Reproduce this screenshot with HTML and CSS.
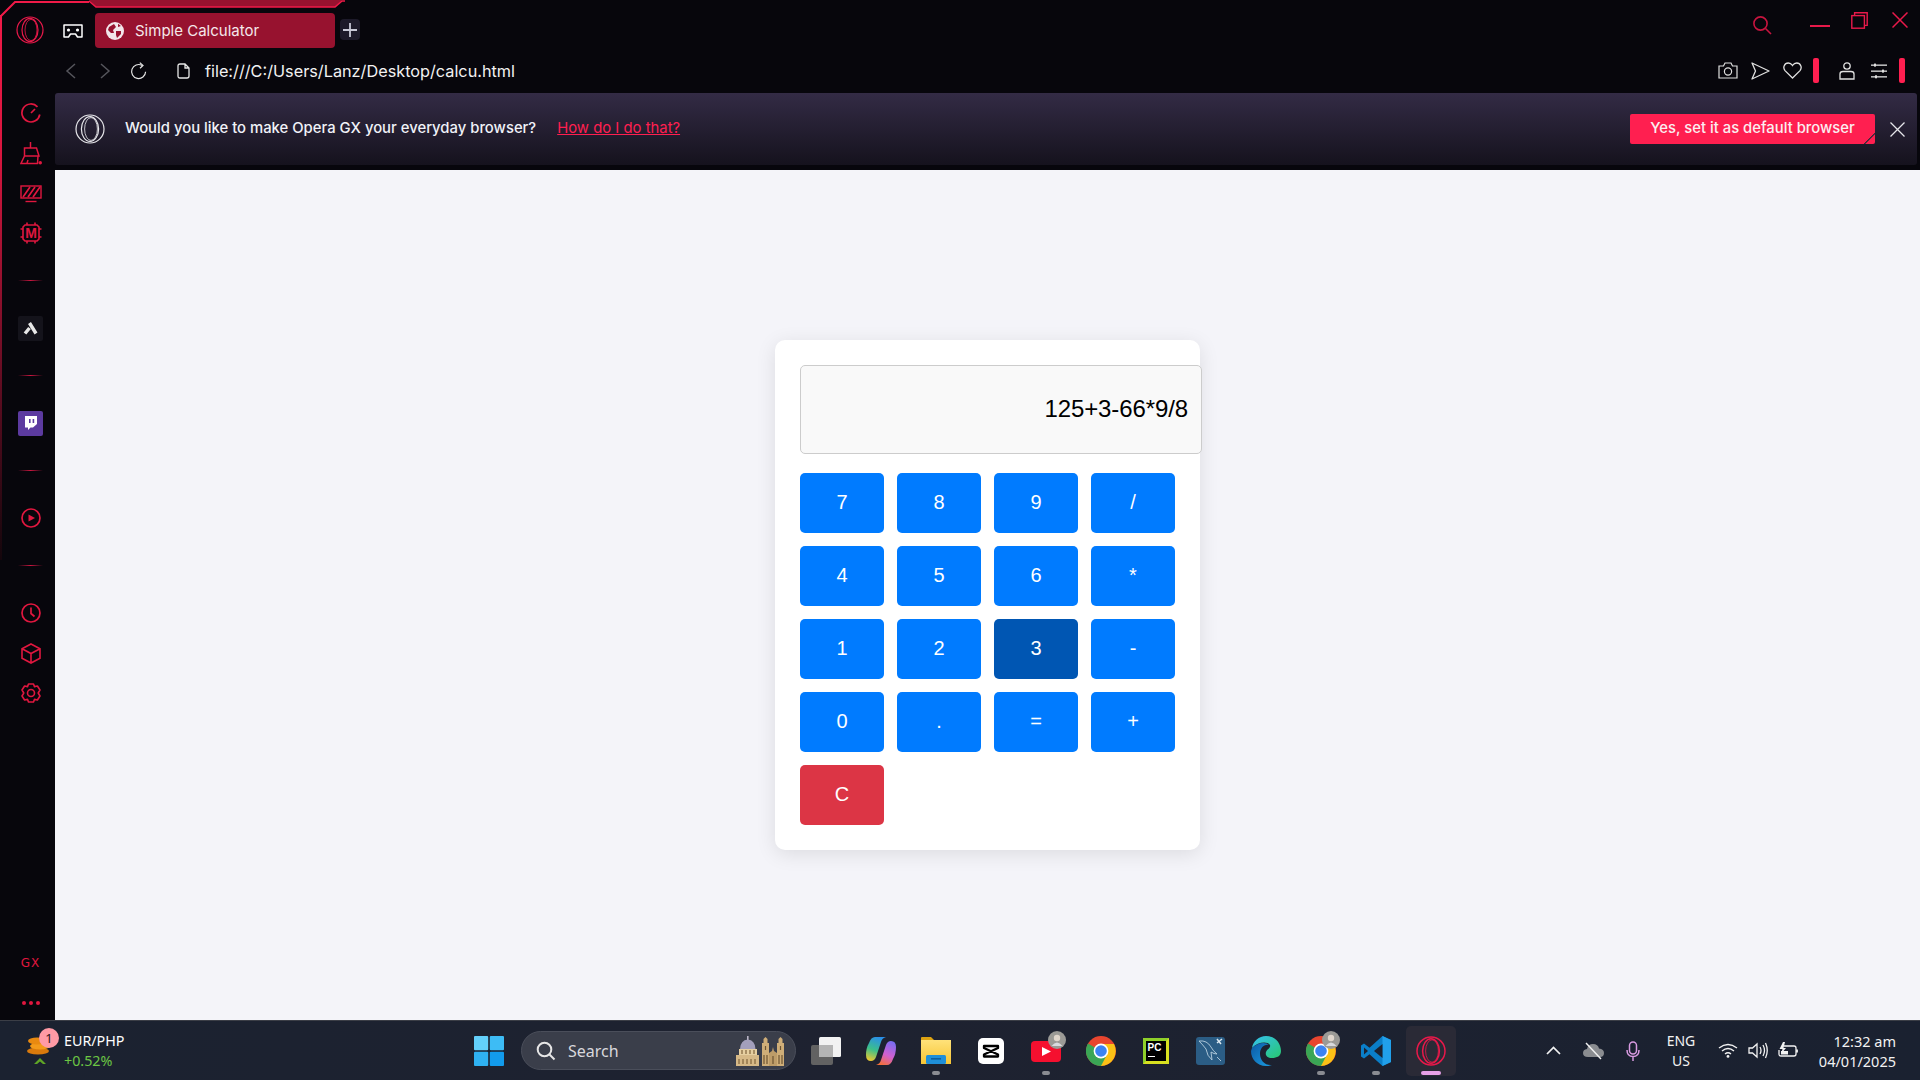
FILE: index.html
```html
<!DOCTYPE html>
<html>
<head>
  <meta http-equiv="Content-Type" content="text/html; charset=UTF-8" />
  <title>Simple Calculator</title>
  <link rel="stylesheet" href="styles.css">
</head>
<body>

<div class="window">
  <!-- red frame over the top and left edge -->
  <svg class="frame" width="345" height="560" viewBox="0 0 345 560" fill="none">
    <defs>
      <linearGradient id="edge" x1="0" y1="0" x2="0" y2="1">
        <stop offset="0" stop-color="#f01a48"/>
        <stop offset="0.25" stop-color="#d8163f"/>
        <stop offset="0.7" stop-color="#5a0c20"/>
        <stop offset="1" stop-color="#14060c"/>
      </linearGradient>
    </defs>
    <path d="M89 0 L96 7 H335 L342 0 Z" fill="#97122f"/>
    <path d="M89 1 L96 7 H335 L342 1 H345" stroke="#f01a48" stroke-width="1.6"/>
    <path d="M1 16 L15 2 H89" stroke="#f01a48" stroke-width="2"/>
    <rect x="0" y="15" width="2" height="545" fill="url(#edge)"/>
  </svg>

  <div class="tabrow">
    <svg class="logo" width="28" height="28" viewBox="0 0 28 28" fill="none" stroke="#e8194a" stroke-width="1.2">
      <circle cx="14" cy="14" r="13"/>
      <ellipse cx="14" cy="14" rx="8" ry="11.6"/>
      <ellipse cx="15" cy="14" rx="6" ry="10.6" stroke-width="0.8"/>
    </svg>
    <svg class="gamepad" width="20" height="14" viewBox="0 0 20 14" fill="none" stroke="#fff" stroke-width="1.5">
      <path d="M1 1 H19 V13 H14.5 L12.5 10 H7.5 L5.5 13 H1 Z" stroke-linejoin="round"/>
      <circle cx="5.5" cy="6" r="1.6" fill="#fff" stroke="none"/>
      <circle cx="14.5" cy="6" r="1.6" fill="#fff" stroke="none"/>
    </svg>
    <div class="tab">
      <svg width="18" height="18" viewBox="0 0 18 18">
        <circle cx="9" cy="9" r="9" fill="#f2e6ea"/>
        <path d="M3 5 L8 2 L10 5 L7 8 L8 11 L5 11 L2 8 Z M10 9 L15 9 L15 12 L11 16 L10 13 Z M12 1.8 L15 4 L12 5 Z" fill="#97122f"/>
      </svg>
      <span>Simple Calculator</span>
    </div>
    <div class="newtab">
      <svg width="16" height="16" viewBox="0 0 16 16" stroke="#c8c8d6" stroke-width="1.8"><path d="M8 1 V15 M1 8 H15"/></svg>
    </div>
    <div class="wincontrols">
      <svg class="win-search" width="20" height="20" viewBox="0 0 20 20" fill="none" stroke="#c8143f" stroke-width="1.6">
        <circle cx="8.5" cy="8.5" r="6.6"/><path d="M13.5 13.5 L19 19"/>
      </svg>
      <svg class="win-min" width="20" height="2" viewBox="0 0 20 2"><rect width="20" height="2" fill="#e8194a"/></svg>
      <svg class="win-max" width="17" height="17" viewBox="0 0 17 17" fill="none" stroke="#e8194a" stroke-width="1.4">
        <rect x="0.8" y="3.6" width="12.6" height="12.6"/><path d="M3.6 3.6 V0.8 H16.2 V13.4 H13.4"/>
      </svg>
      <svg class="win-close" width="16" height="16" viewBox="0 0 16 16" stroke="#e8194a" stroke-width="1.5"><path d="M0.5 0.5 L15.5 15.5 M15.5 0.5 L0.5 15.5"/></svg>
    </div>
  </div>

  <div class="navrow">
    <div class="navbtn"><svg width="12" height="16" viewBox="0 0 12 16" fill="none" stroke="#55555c" stroke-width="1.5"><path d="M10 1 L2 8 L10 15"/></svg></div>
    <div class="navbtn"><svg width="12" height="16" viewBox="0 0 12 16" fill="none" stroke="#55555c" stroke-width="1.5"><path d="M2 1 L10 8 L2 15"/></svg></div>
    <div class="navbtn"><svg width="18" height="18" viewBox="0 0 18 18" fill="none" stroke="#e6e6e6" stroke-width="1.2"><path d="M15.6 9.8 A7 7 0 1 1 12 3.4"/><path d="M9.8 0.6 L13 3.4 L10 6.2"/></svg></div>
    <div class="filebtn"><svg width="13" height="16" viewBox="0 0 13 16" fill="none" stroke="#e6e6e6" stroke-width="1.3"><path d="M1 3 Q1 1 3 1 H8 L12 5 V13 Q12 15 10 15 H3 Q1 15 1 13 Z M8 1 V5 H12"/></svg></div>
    <span class="url">file:///C:/Users/Lanz/Desktop/calcu.html</span>
    <div class="tools">
      <div class="tool"><svg width="20" height="17" viewBox="0 0 20 17" fill="none" stroke="#e0e0e0" stroke-width="1.2"><path d="M1 4 H5.5 L7 1 H13 L14.5 4 H19 V16 H1 Z"/><circle cx="10" cy="9.5" r="3.6"/></svg></div>
      <div class="tool"><svg width="19" height="18" viewBox="0 0 19 18" fill="none" stroke="#e0e0e0" stroke-width="1.3"><path d="M1 1 L18 9 L1 17 L4.5 9 Z" stroke-linejoin="round"/></svg></div>
      <div class="tool"><svg width="19" height="17" viewBox="0 0 19 17" fill="none" stroke="#e0e0e0" stroke-width="1.3"><path d="M9.5 16 L2 8.6 C-0.5 5.5 1.4 1 5.2 1 C7 1 8.5 2 9.5 3.5 C10.5 2 12 1 13.8 1 C17.6 1 19.5 5.5 17 8.6 Z"/></svg></div>
      <div class="redbar first"></div>
      <div class="tool user"><svg width="16" height="18" viewBox="0 0 16 18" fill="none" stroke="#e0e0e0" stroke-width="1.3"><circle cx="8" cy="4" r="3.2"/><path d="M1 17 V12 Q1 9.5 4 9.5 H12 Q15 9.5 15 12 V17 Z"/></svg></div>
      <div class="tool"><svg width="16" height="16" viewBox="0 0 16 16" fill="#e0e0e0"><rect y="1.5" width="16" height="1.3"/><rect y="7.5" width="16" height="1.3"/><rect y="13.2" width="16" height="1.3"/><rect x="3" y="0.6" width="2" height="3"/><rect x="11" y="6.6" width="2" height="3"/><rect x="4" y="12.3" width="2" height="3"/></svg></div>
      <div class="redbar"></div>
    </div>
  </div>

  <div class="main">
    <div class="sidebar">
      <div class="sideitem"><svg width="20" height="20" viewBox="0 0 20 20" fill="none" stroke="#e0173f" stroke-width="1.7"><path d="M18.8 11.5 A9 9 0 1 1 16.5 3.8"/><path d="M10 10 L14 6"/></svg></div>
      <div class="sideitem"><svg width="22" height="23" viewBox="0 0 22 23" fill="none" stroke="#e0173f" stroke-width="1.5"><path d="M10.5 0 V6 M4.5 6 H16.5 L19 14 H4.5 Z M4.5 14 L1 21.5 H17.5 L18 14"/><path d="M7 21 L8 18"/><rect x="18.5" y="19" width="3.5" height="3.5" rx="1.7" fill="#e0173f" stroke="none"/></svg></div>
      <div class="sideitem"><svg width="22" height="20" viewBox="0 0 22 20" fill="none" stroke="#e0173f" stroke-width="1.4"><rect x="1" y="3" width="20" height="12"/><path d="M3 14 L10 4 M8 14 L15 4 M13 14 L20 4" stroke-width="1.7"/><path d="M5.5 18.5 H16.5"/></svg></div>
      <div class="sideitem">
        <svg width="22" height="22" viewBox="0 0 22 22" fill="none" stroke="#e0173f" stroke-width="1.6">
          <path d="M3 5 L5 3 H17 L19 5 V17 L17 19 H5 L3 17 Z"/>
          <path d="M7 0.5 V3 M15 0.5 V3 M7 19 V21.5 M15 19 V21.5 M0.5 7 H3 M0.5 15 H3 M19 7 H21.5 M19 15 H21.5"/>
          <text x="11" y="16" text-anchor="middle" class="chip-text">M</text>
        </svg>
      </div>
      <div class="sep"></div>
      <div class="sideitem"><div class="sidetile kite"><svg width="15" height="13" viewBox="0 0 15 13" fill="none" stroke="#e8e8e8" stroke-width="3.4"><path d="M6.5 1 L13 11.5 M2 11.5 L6.5 6"/></svg></div></div>
      <div class="sep"></div>
      <div class="sideitem"><div class="sidetile twitch"><svg width="13" height="14" viewBox="0 0 13 14"><path d="M1 0 H13 V8 L9 11.5 H6.5 L4 14 V11.5 H1 Z" fill="#fff"/><rect x="5" y="3" width="1.6" height="4" fill="#5c3aa0"/><rect x="8.6" y="3" width="1.6" height="4" fill="#5c3aa0"/></svg></div></div>
      <div class="sep"></div>
      <div class="sideitem"><svg width="20" height="20" viewBox="0 0 20 20" fill="none" stroke="#e0173f" stroke-width="1.7"><circle cx="10" cy="10" r="9"/><path d="M7.5 6.5 L14 10 L7.5 13.5 Z" fill="#e0173f" stroke="none"/></svg></div>
      <div class="sep"></div>
      <div class="sideitem"><svg width="20" height="20" viewBox="0 0 20 20" fill="none" stroke="#e0173f" stroke-width="1.7"><circle cx="10" cy="10" r="9"/><path d="M10 4.5 V10.5 L13.5 13.5"/></svg></div>
      <div class="sideitem"><svg width="20" height="21" viewBox="0 0 20 21" fill="none" stroke="#e0173f" stroke-width="1.6"><path d="M10 1 L19 5.8 V15.2 L10 20 L1 15.2 V5.8 Z M1 5.8 L10 10.5 L19 5.8 M10 10.5 V20"/></svg></div>
      <div class="sideitem"><svg width="20" height="20" viewBox="0 0 20 20" fill="none" stroke="#e0173f" stroke-width="1.6"><circle cx="10" cy="10" r="3.5"/><path d="M7.5 1 H12.5 L13.5 3.6 L16.4 3 L19 7 L17.2 10 L19 13 L16.4 17 L13.5 16.4 L12.5 19 H7.5 L6.5 16.4 L3.6 17 L1 13 L2.8 10 L1 7 L3.6 3 L6.5 3.6 Z" stroke-linejoin="round"/></svg></div>
      <div class="sidebottom">
        <span class="gx">GX</span>
        <div class="dots"><i></i><i></i><i></i></div>
      </div>
    </div>

    <div class="content">
      <div class="banner">
        <svg class="banner-logo" width="30" height="30" viewBox="0 0 30 30" fill="none" stroke="#e8e8ec" stroke-width="1.2">
          <circle cx="15" cy="15" r="14"/>
          <ellipse cx="15" cy="15" rx="8.6" ry="12.4"/>
          <ellipse cx="16" cy="15" rx="6.4" ry="11.4" stroke-width="0.8"/>
        </svg>
        <span class="banner-text">Would you like to make Opera GX your everyday browser?</span>
        <a class="banner-link" href="#">How do I do that?</a>
        <button class="banner-btn">Yes, set it as default browser</button>
        <svg class="banner-close" width="15" height="15" viewBox="0 0 15 15" stroke="#e6e6ea" stroke-width="1.3"><path d="M0.5 0.5 L14.5 14.5 M14.5 0.5 L0.5 14.5"/></svg>
      </div>

      <div class="page">
        <div class="calculator">
          <div class="display">125+3-66*9/8</div>
          <div class="keys">
            <button class="key">7</button>
            <button class="key">8</button>
            <button class="key">9</button>
            <button class="key">/</button>
            <button class="key">4</button>
            <button class="key">5</button>
            <button class="key">6</button>
            <button class="key">*</button>
            <button class="key">1</button>
            <button class="key">2</button>
            <button class="key active">3</button>
            <button class="key">-</button>
            <button class="key">0</button>
            <button class="key">.</button>
            <button class="key">=</button>
            <button class="key">+</button>
            <button class="key clear">C</button>
          </div>
        </div>
      </div>
    </div>
  </div>
</div>

<div class="taskbar">
  <div class="widget">
    <svg class="coins" width="26" height="30" viewBox="0 0 26 30">
      <ellipse cx="12" cy="15" rx="11" ry="3.6" fill="#d97a0c"/>
      <ellipse cx="14" cy="10" rx="10" ry="3.6" fill="#f39a1a"/>
      <ellipse cx="11" cy="5" rx="9" ry="3.4" fill="#e98a10"/>
      <path d="M8 28 L14 22 L20 28 L17 28 L14 25.5 L11 28 Z" fill="#5fa526"/>
    </svg>
    <span class="badge">1</span>
    <div class="widget-text">
      <span>EUR/PHP</span>
      <span class="up">+0.52%</span>
    </div>
  </div>

  <svg class="start" width="30" height="30" viewBox="0 0 30 30">
    <rect x="0" y="0" width="14.2" height="14.2" rx="1" fill="#63d0fb"/>
    <rect x="15.8" y="0" width="14.2" height="14.2" rx="1" fill="#3dbcf5"/>
    <rect x="0" y="15.8" width="14.2" height="14.2" rx="1" fill="#2fb2f2"/>
    <rect x="15.8" y="15.8" width="14.2" height="14.2" rx="1" fill="#129bec"/>
  </svg>

  <div class="searchbox">
    <svg width="20" height="20" viewBox="0 0 20 20" fill="none" stroke="#e6e6e6" stroke-width="2"><circle cx="8.5" cy="8.5" r="6.8"/><path d="M13.5 13.5 L18.5 18.5"/></svg>
    <span>Search</span>
    <svg class="buildings" width="50" height="30" viewBox="0 0 50 30">
      <rect x="11" y="0" width="1.6" height="5" fill="#b8b4c4"/>
      <path d="M4 13 Q4.5 4 11.8 3.5 Q19 4 19.5 13 Z" fill="#a39fbb"/>
      <rect x="3" y="13" width="18" height="7" fill="#e6cfa0"/>
      <rect x="0" y="19" width="23" height="11" fill="#d6b987"/>
      <path d="M6 14 V18 M10 14 V18 M14 14 V18 M18 14 V18 M3 23 V28 M7 23 V28 M11 23 V28 M15 23 V28 M19 23 V28" stroke="#80643c" stroke-width="1.2"/>
      <path d="M26 30 V7 L27.5 7 V3 L29.5 1 L31.5 3 V7 L33 7 V30 Z" fill="#cfae78"/>
      <path d="M41 30 V7 L42.5 7 V3 L44.5 1 L46.5 3 V7 L48 7 V30 Z" fill="#cfae78"/>
      <path d="M33 30 V17 L36 15 L37 11 L38 15 L41 17 V30 Z" fill="#bd9c68"/>
      <path d="M29.5 10 V14 M44.5 10 V14 M28 19 V28 M31 19 V28 M43 19 V28 M46 19 V28 M37 20 V28" stroke="#6d5432" stroke-width="1.2"/>
    </svg>
  </div>

  <div class="tasks">
    <div class="task">
      <svg width="30" height="28" viewBox="0 0 30 28">
        <rect x="0" y="8" width="22" height="20" rx="2" fill="#626262"/>
        <rect x="8" y="0" width="22" height="20" rx="1.5" fill="#f2f2f2"/>
        <rect x="8" y="8" width="14" height="12" fill="#b4b4b4"/>
      </svg>
    </div>
    <div class="task">
      <svg width="30" height="28" viewBox="0 0 30 28">
        <defs>
          <linearGradient id="cop1" x1="0.6" y1="0" x2="0.3" y2="1"><stop offset="0" stop-color="#2a8fe8"/><stop offset="0.55" stop-color="#3cc08a"/><stop offset="1" stop-color="#e8c832"/></linearGradient>
          <linearGradient id="cop2" x1="0.7" y1="0" x2="0.3" y2="1"><stop offset="0" stop-color="#7a6cf0"/><stop offset="0.55" stop-color="#d060d0"/><stop offset="1" stop-color="#f4703a"/></linearGradient>
        </defs>
        <path d="M9 0 H20 Q16 1 15 5 L10 20 Q8.5 24 5 24 Q0 24 0 18 Q0 11 3 6 Q5 0 9 0 Z" fill="url(#cop1)"/>
        <path d="M21 28 H10 Q14 27 15 23 L20 8 Q21.5 4 25 4 Q30 4 30 10 Q30 17 27 22 Q25 28 21 28 Z" fill="url(#cop2)"/>
      </svg>
    </div>
    <div class="task running">
      <svg width="30" height="27" viewBox="0 0 30 27">
        <defs>
          <linearGradient id="folder" x1="0" y1="0" x2="0" y2="1"><stop offset="0" stop-color="#ffe27a"/><stop offset="1" stop-color="#f7c534"/></linearGradient>
        </defs>
        <path d="M0 1 Q0 0 1 0 H10 L13 3 H0 Z" fill="#dda312"/>
        <rect x="0" y="3" width="30" height="24" fill="url(#folder)"/>
        <rect x="5" y="18" width="20" height="9" rx="1.5" fill="#1f8fd8"/>
        <rect x="10" y="21" width="10" height="1.6" fill="#0d5f9e"/>
      </svg>
    </div>
    <div class="task">
      <svg width="26" height="26" viewBox="0 0 26 26">
        <rect width="26" height="26" rx="5" fill="#fff"/>
        <path d="M6 8 H20 V10 L6 16.5 V18.5 H20 V16.5 L6 10 Z" fill="none" stroke="#000" stroke-width="2.3" stroke-linejoin="round"/>
      </svg>
    </div>
    <div class="task running">
      <svg width="40" height="40" viewBox="0 0 40 40">
        <rect x="5" y="10" width="30" height="21" rx="4" fill="#f5102f"/>
        <path d="M16 16 L25 20.5 L16 25 Z" fill="#fff"/>
        <circle cx="31" cy="9" r="9" fill="#9b9a96"/>
        <circle cx="31" cy="7" r="3.2" fill="#e0d6cc"/>
        <path d="M25.5 15 Q31 8 36.5 15 Z" fill="#d8dade"/>
      </svg>
    </div>
    <div class="task">
      <svg width="30" height="30" viewBox="0 0 30 30">
        <circle cx="15" cy="15" r="15" fill="#e8452f"/>
        <path d="M15 8 H28 A15 15 0 0 1 15 30 L15 15 Z" fill="#fbc116"/>
        <path d="M2 7.5 A15 15 0 0 0 15 30 L21 18.5 L15 15 Z" fill="#3aa655"/>
        <circle cx="15" cy="15" r="7.4" fill="#fff"/>
        <circle cx="15" cy="15" r="5.8" fill="#3b83f2"/>
      </svg>
    </div>
    <div class="task">
      <div class="pycharm"><span>PC</span><i></i></div>
    </div>
    <div class="task">
      <svg width="29" height="28" viewBox="0 0 29 28" fill="none">
        <rect width="29" height="28" rx="3" fill="#2b5d85"/>
        <path d="M3 4 Q11 3 15 10 Q17 14 21 17 Q18 17 15 15 L16 23 Q11 19 10 12 Q7 8 3 4 Z" stroke="#b8cfdf" stroke-width="0.9"/>
        <path d="M21 2 L25 7 M26 2 L21 6" stroke="#dbe8f0" stroke-width="1.5"/>
        <path d="M21 20 L25 24" stroke="#b8cfdf" stroke-width="0.9"/>
      </svg>
    </div>
    <div class="task">
      <svg width="30" height="30" viewBox="0 0 30 30">
        <defs>
          <linearGradient id="edge1" x1="0" y1="0" x2="1" y2="1"><stop offset="0" stop-color="#35c1f1"/><stop offset="1" stop-color="#28c870"/></linearGradient>
          <linearGradient id="edge2" x1="0" y1="0" x2="1" y2="1"><stop offset="0" stop-color="#0c59a4"/><stop offset="1" stop-color="#1b9de2"/></linearGradient>
        </defs>
        <path d="M15 0 C24 0 30 7 30 15 C30 20 26 22 21 22 C16 22 14 19 15 16 C16 13 20 12 19 9 C16 5 7 6 1 12 C2 5 8 0 15 0 Z" fill="url(#edge1)"/>
        <path d="M1 12 C7 6 15 6 18 9 C13 8 9 12 9 18 C9 24 14 30 21 29 C18 30 16 30 15 30 C6 30 0 23 0 15 Z" fill="url(#edge2)"/>
      </svg>
    </div>
    <div class="task running">
      <svg width="42" height="40" viewBox="0 0 42 40">
        <circle cx="21" cy="20" r="15" fill="#e8452f"/>
        <path d="M21 13 H34 A15 15 0 0 1 21 35 L21 20 Z" fill="#fbc116"/>
        <path d="M8 12.5 A15 15 0 0 0 21 35 L27 23.5 L21 20 Z" fill="#3aa655"/>
        <circle cx="21" cy="20" r="7.4" fill="#fff"/>
        <circle cx="21" cy="20" r="5.8" fill="#3b83f2"/>
        <circle cx="31" cy="9" r="9" fill="#9b9a96"/>
        <circle cx="31" cy="7" r="3.2" fill="#e0d6cc"/>
        <path d="M25.5 15 Q31 8 36.5 15 Z" fill="#d8dade"/>
      </svg>
    </div>
    <div class="task running">
      <svg width="30" height="30" viewBox="0 0 30 30">
        <path d="M21.5 0 L30 4 V26 L21.5 30 L8.5 18.2 L3 22.4 L0 20.6 V9.4 L3 7.6 L8.5 11.8 Z" fill="#0a7ec8"/>
        <path d="M21.5 0 L30 4 V26 L21.5 30 Z" fill="#21a0ea"/>
        <path d="M21.5 8 L13 15 L21.5 22 Z" fill="#1c2230"/>
        <path d="M3 11.5 V18.5 L7 15 Z" fill="#1c2230"/>
      </svg>
    </div>
    <div class="task current">
      <svg width="30" height="30" viewBox="0 0 30 30" fill="none" stroke="#e8194a" stroke-width="1.5">
        <circle cx="15" cy="15" r="14"/>
        <ellipse cx="15" cy="15" rx="8.4" ry="12.2"/>
        <ellipse cx="16" cy="15" rx="6.4" ry="11.2" stroke-width="0.8"/>
      </svg>
    </div>
  </div>

  <div class="tray">
    <div class="trayitem"><svg width="15" height="9" viewBox="0 0 15 9" fill="none" stroke="#f2f2f2" stroke-width="1.7"><path d="M1 8 L7.5 1.5 L14 8"/></svg></div>
    <div class="trayitem"><svg width="21" height="18" viewBox="0 0 21 18"><path d="M5 15 Q0 15 0 11 Q0 7.5 4 7 Q5 2 10 2 Q15 2 16 6.5 Q21 7 21 11 Q21 15 17 15 Z" fill="#8a8c90"/><path d="M3 1 L18 17" stroke="#f0f0f0" stroke-width="1.4"/></svg></div>
    <div class="trayitem"><svg width="14" height="20" viewBox="0 0 14 20" fill="none" stroke="#d89ae0" stroke-width="1.5"><rect x="3.5" y="1" width="7" height="12" rx="3.5"/><path d="M1 9 Q1 15.5 7 15.5 Q13 15.5 13 9 M7 15.5 V20"/></svg></div>
    <div class="lang"><span>ENG</span><span>US</span></div>
    <div class="trayicon"><svg width="20" height="15" viewBox="0 0 20 15" fill="none" stroke="#f2f2f2" stroke-width="1.4"><path d="M1 5 Q10 -2 19 5 M4 8 Q10 3 16 8 M7 11 Q10 8.5 13 11"/><circle cx="10" cy="13.4" r="1.4" fill="#f2f2f2" stroke="none"/></svg></div>
    <div class="trayicon"><svg width="20" height="17" viewBox="0 0 20 17" fill="none" stroke="#f2f2f2" stroke-width="1.3"><path d="M1 6 H4.5 L9 2 V15 L4.5 11 H1 Z"/><path d="M12 5 Q14 8.5 12 12 M15 3 Q18 8.5 15 14 M17.5 1 Q21 8.5 17.5 16" /></svg></div>
    <div class="trayicon"><svg width="20" height="17" viewBox="0 0 20 17" fill="none" stroke="#f2f2f2" stroke-width="1.3"><path d="M6 4 H16 Q18 4 18 6 V12 Q18 14 16 14 H3 Q1 14 1 12 V8"/><path d="M19 7.5 V10.5" stroke-width="1.8"/><path d="M5 0 L1.5 7 H4.5 L3 12 L8 6 H5.5 L7 0 Z" fill="#f2f2f2" stroke="none"/><rect x="3" y="9" width="7" height="3.5" fill="#f2f2f2" stroke="none"/></svg></div>
    <div class="clock"><span>12:32 am</span><span>04/01/2025</span></div>
  </div>
</div>

</body>
</html>
```

FILE: styles.css
```css
* {
  box-sizing: border-box;
}
html, body {
  margin: 0;
  padding: 0;
}
body {
  width: 1920px;
  height: 1080px;
  overflow: hidden;
  background: #07060c;
  font-family: Inter, "Liberation Sans", sans-serif;
  color: #fff;
}

.window {
  position: relative;
  height: 1020px;
  display: flex;
  flex-direction: column;
}
.frame {
  position: absolute;
  left: 0;
  top: 0;
  pointer-events: none;
}

/* tab row */
.tabrow {
  height: 48px;
  display: flex;
  align-items: flex-start;
  flex-shrink: 0;
}
.logo {
  margin: 16px 0 0 16px;
}
.gamepad {
  margin: 24px 0 0 19px;
}
.tab {
  width: 240px;
  height: 35px;
  margin: 13px 0 0 12px;
  padding-left: 11px;
  display: flex;
  align-items: center;
  gap: 11px;
  background: #97122f;
  border-radius: 4px;
  font-size: 15px;
  color: #f4e8ea;
}
.newtab {
  width: 20px;
  height: 21px;
  margin: 19px 0 0 5px;
  background: #1d1a2a;
  border-radius: 4px;
  display: flex;
  align-items: center;
  justify-content: center;
}
.wincontrols {
  margin-left: auto;
  padding-right: 12px;
  display: flex;
  align-items: flex-start;
}
.win-search {
  margin: 15px 0 0 0;
}
.win-min {
  margin: 25px 0 0 38px;
}
.win-max {
  margin: 12px 0 0 21px;
}
.win-close {
  margin: 12px 0 0 24px;
}

/* address row */
.navrow {
  height: 45px;
  padding-left: 54px;
  display: flex;
  align-items: center;
  flex-shrink: 0;
}
.navbtn {
  width: 34px;
  display: flex;
  justify-content: center;
}
.filebtn {
  width: 20px;
  margin-left: 17px;
  display: flex;
  justify-content: center;
}
.url {
  margin-left: 12px;
  font-size: 16.25px;
  color: #f2f2f2;
}
.tools {
  margin-left: auto;
  padding-right: 15px;
  display: flex;
  align-items: center;
}
.tool {
  width: 32px;
  display: flex;
  justify-content: center;
}
.tool.user {
  margin-left: 12px;
}
.redbar {
  width: 6px;
  height: 25px;
  margin-left: 4px;
  background: #ff1f50;
  border-radius: 2px;
}
.redbar.first {
  margin-left: 5px;
}

/* sidebar and content */
.main {
  flex: 1;
  display: flex;
  min-height: 0;
}
.sidebar {
  width: 55px;
  padding-left: 6px;
  flex-shrink: 0;
  display: flex;
  flex-direction: column;
  align-items: center;
}
.sideitem {
  width: 49px;
  height: 40px;
  display: flex;
  align-items: center;
  justify-content: center;
  flex-shrink: 0;
}
.chip-text {
  font-family: "Liberation Sans", sans-serif;
  font-size: 14px;
  font-weight: 700;
  fill: #e0173f;
  stroke: none;
}
.sep {
  width: 25px;
  height: 1px;
  margin: 27px 0;
  background: linear-gradient(90deg, transparent, #c8163f, transparent);
  flex-shrink: 0;
}
.sidetile {
  width: 25px;
  height: 25px;
  border-radius: 2px;
  display: flex;
  align-items: center;
  justify-content: center;
}
.kite {
  background: #14131b;
}
.twitch {
  background: #5c3aa0;
}
.sidebottom {
  margin-top: auto;
  padding-bottom: 15px;
  display: flex;
  flex-direction: column;
  align-items: center;
  gap: 31px;
}
.gx {
  font-size: 12px;
  letter-spacing: 1px;
  line-height: 14px;
  color: #e0173f;
  font-family: "DejaVu Sans", sans-serif;
}
.dots {
  display: flex;
  gap: 3px;
}
.dots i {
  width: 4px;
  height: 4px;
  border-radius: 50%;
  background: #e0173f;
}
.content {
  flex: 1;
  min-width: 0;
  display: flex;
  flex-direction: column;
}

/* default browser banner */
.banner {
  height: 72px;
  margin-right: 3px;
  padding: 0 12px 2px 20px;
  display: flex;
  align-items: center;
  flex-shrink: 0;
  background: linear-gradient(#332b45, #15121d);
  border-radius: 3px;
  font-size: 14.85px;
  font-weight: 500;
}
.banner-logo {
  margin-top: 2px;
}
.banner-text {
  margin-left: 20px;
  color: #f0f2f8;
}
.banner-link {
  margin-left: 21px;
  color: #ff1f50;
  font-weight: 400;
}
.banner-btn {
  position: relative;
  width: 245px;
  height: 30px;
  margin: 2px 0 0 auto;
  padding: 0 0 2px;
  border: 0;
  border-radius: 2px;
  background: #ff1f50;
  color: #fbeef0;
  font-family: inherit;
  font-size: 14.85px;
  font-weight: 500;
  overflow: hidden;
}
.banner-btn::after {
  content: "";
  position: absolute;
  right: 0;
  bottom: 0;
  width: 11px;
  height: 11px;
  background: linear-gradient(135deg, transparent 46%, #3a2a3a 48%, #3a2a3a 54%, transparent 56%);
}
.banner-close {
  margin: 2px 0 0 15px;
}

/* the page itself */
.page {
  flex: 1;
  margin-top: 5px;
  background: #f4f4f9;
  display: flex;
  align-items: center;
  justify-content: center;
  font-family: "Liberation Sans", Arial, sans-serif;
}
.calculator {
  width: 425px;
  padding: 25px;
  background: #fff;
  border-radius: 10px;
  box-shadow: 0 4px 20px rgba(0, 0, 0, 0.1);
}
.display {
  width: 402px;
  height: 89px;
  margin-bottom: 19px;
  padding: 0 13px 2px 0;
  display: flex;
  align-items: center;
  justify-content: flex-end;
  background: #f9f9f9;
  border: 1px solid #ccc;
  border-radius: 5px;
  font-size: 24px;
  letter-spacing: -0.1px;
  color: #000;
}
.keys {
  display: grid;
  grid-template-columns: repeat(4, 84px);
  grid-auto-rows: 60px;
  gap: 13px;
}
.key {
  border: 0;
  border-radius: 5px;
  background: #007bff;
  color: #fff;
  font-family: inherit;
  font-size: 20px;
  padding: 0 0 1px;
}
.key.active {
  background: #0056b3;
}
.key.clear {
  background: #dc3545;
}

/* windows taskbar */
.taskbar {
  position: relative;
  height: 60px;
  display: flex;
  align-items: center;
  background: linear-gradient(90deg, #1b2230, #1e2230 45%, #1a2130);
  border-top: 1px solid #3b3e46;
  font-family: "Noto Sans", "Open Sans", sans-serif;
}
.widget {
  position: relative;
  width: 474px;
  height: 100%;
  padding-left: 64px;
  display: flex;
  align-items: center;
  flex-shrink: 0;
}
.coins {
  position: absolute;
  left: 26px;
  top: 15px;
}
.badge {
  position: absolute;
  left: 39px;
  top: 7px;
  width: 20px;
  height: 20px;
  border-radius: 50%;
  background: #ff9aa5;
  color: #30131a;
  font-size: 13px;
  line-height: 20px;
  text-align: center;
}
.widget-text {
  display: flex;
  flex-direction: column;
  font-size: 14.3px;
  line-height: 20px;
}
.widget-text .up {
  color: #6cc644;
}
.start {
  flex-shrink: 0;
}
.searchbox {
  width: 275px;
  height: 39px;
  margin-left: 17px;
  padding-left: 14px;
  display: flex;
  align-items: center;
  gap: 12px;
  flex-shrink: 0;
  background: #3a3e4a;
  border: 1px solid #4a4e5a;
  border-radius: 20px;
  font-size: 16px;
  color: #d8d8dc;
  overflow: hidden;
}
.buildings {
  margin-left: auto;
  margin-right: 9px;
}
.tasks {
  margin-left: 2px;
  display: flex;
  align-items: center;
  flex-shrink: 0;
}
.task {
  position: relative;
  width: 55px;
  height: 50px;
  display: flex;
  align-items: center;
  justify-content: center;
}
.task.running::after {
  content: "";
  position: absolute;
  left: 24px;
  bottom: 1px;
  width: 8px;
  height: 4px;
  border-radius: 2px;
  background: #8a8c92;
}
.task.current {
  background: #2a2a36;
  border-radius: 5px;
  margin-left: 3px;
  width: 50px;
}
.task.current::after {
  content: "";
  position: absolute;
  left: 15px;
  bottom: 1px;
  width: 20px;
  height: 4px;
  border-radius: 2px;
  background: #e6a0e8;
}
.pycharm {
  width: 26px;
  height: 26px;
  padding: 1px 0 0 2px;
  background: #000;
  border: 3px solid;
  border-color: #8fd02a #d8e020 #d8e020 #8fd02a;
  font-family: "Liberation Sans", sans-serif;
  font-size: 10px;
  font-weight: 700;
  line-height: 11px;
  color: #fff;
  display: flex;
  flex-direction: column;
}
.pycharm i {
  width: 7px;
  height: 1.5px;
  margin-top: 3px;
  background: #fff;
}
.tray {
  margin-left: auto;
  padding-right: 24px;
  display: flex;
  align-items: center;
}
.trayitem {
  width: 40px;
  display: flex;
  justify-content: center;
}
.lang {
  width: 56px;
  margin-right: 4px;
  display: flex;
  flex-direction: column;
  align-items: center;
  font-size: 14px;
  line-height: 20px;
  color: #f2f2f2;
}
.trayicon {
  width: 30px;
  display: flex;
  justify-content: center;
}
.clock {
  width: 93px;
  display: flex;
  flex-direction: column;
  align-items: flex-end;
  font-size: 14.5px;
  line-height: 20px;
  color: #f2f2f2;
}
```
